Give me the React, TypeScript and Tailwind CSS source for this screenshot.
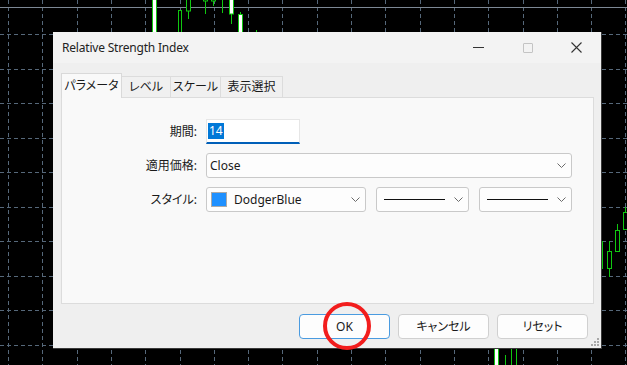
import { FC } from 'react'

const GREEN = '#10c810'

const Chart: FC = () => {
  const vx = Array.from({ length: 19 }, (_, i) => 8 + i * 34.3)
  const hy = Array.from({ length: 10 }, (_, i) => 34 + i * 34.5)
  return (
    <svg className="absolute inset-0" width={627} height={365} viewBox="0 0 627 365">
      <rect width={627} height={365} fill="#000" />
      {vx.map((x) => (
        <line key={'v' + x} x1={Math.round(x) + 0.5} y1={0} x2={Math.round(x) + 0.5} y2={365} stroke="#56687a" strokeDasharray="4 3" />
      ))}
      {hy.map((y) => (
        <line key={'h' + y} x1={0} y1={Math.round(y) + 0.5} x2={627} y2={Math.round(y) + 0.5} stroke="#56687a" strokeDasharray="4 3" />
      ))}
      <line x1={0} y1={7.5} x2={627} y2={7.5} stroke="#7d8895" />
      {/* top candles */}
      <rect x={152.5} y={-2} width={4} height={36} fill="#fff" stroke={GREEN} />
      <rect x={178.5} y={10.5} width={3} height={24} fill="#000" stroke={GREEN} />
      <line x1={188.5} y1={0} x2={188.5} y2={19} stroke={GREEN} />
      <rect x={186.5} y={-2} width={4} height={13} fill="#000" stroke={GREEN} />
      <line x1={205.5} y1={0} x2={205.5} y2={14} stroke={GREEN} />
      <rect x={203.5} y={-2} width={4} height={3} fill="#000" stroke={GREEN} />
      <line x1={213.5} y1={0} x2={213.5} y2={6} stroke={GREEN} />
      <rect x={211.5} y={-2} width={4} height={3} fill="#000" stroke={GREEN} />
      <line x1={222.5} y1={0} x2={222.5} y2={13} stroke={GREEN} />
      <line x1={231.5} y1={0} x2={231.5} y2={24} stroke={GREEN} />
      <rect x={229.5} y={-2} width={4} height={16} fill="#fff" stroke={GREEN} />
      <line x1={240.5} y1={12} x2={240.5} y2={34} stroke={GREEN} />
      <rect x={238.5} y={14.5} width={4} height={20} fill="#fff" stroke={GREEN} />
      <line x1={256.5} y1={30} x2={256.5} y2={34} stroke={GREEN} />
      {/* right candles */}
      <line x1={602.5} y1={241} x2={602.5} y2={269} stroke={GREEN} />
      <line x1={609.5} y1={241} x2={609.5} y2={277} stroke={GREEN} />
      <rect x={607.5} y={251.5} width={4} height={17} fill="#000" stroke={GREEN} />
      <line x1={617.5} y1={224} x2={617.5} y2={252} stroke={GREEN} />
      <rect x={615.5} y={230.5} width={4} height={21} fill="#000" stroke={GREEN} />
      <line x1={625.5} y1={207} x2={625.5} y2={230} stroke={GREEN} />
      <rect x={623.5} y={212.5} width={5} height={17} fill="#000" stroke={GREEN} />
      {/* bottom candles */}
      <rect x={494.5} y={346} width={4} height={22} fill="#fff" stroke={GREEN} />
      <line x1={505.5} y1={355} x2={505.5} y2={365} stroke={GREEN} />
      <line x1={511.5} y1={348} x2={511.5} y2={365} stroke={GREEN} />
      <line x1={516.5} y1={348} x2={516.5} y2={365} stroke={GREEN} />
    </svg>
  )
}

const Chevron: FC = () => (
  <svg width={9} height={5} viewBox="0 0 9 5" className="shrink-0">
    <path d="M0.5 0.5 L4.5 4.5 L8.5 0.5" fill="none" stroke="#6b6b6b" strokeWidth={1} />
  </svg>
)

const Select: FC<{ className: string; children?: React.ReactNode }> = ({ className, children }) => (
  <div
    className={`flex h-[25px] items-center rounded-[3px] border border-[#c9c9c9] bg-[#fdfdfd] pr-[5px] ${className}`}
  >
    <div className="flex min-w-0 flex-1 items-center">{children}</div>
    <Chevron />
  </div>
)

const tabs = [
  { label: 'パラメータ', w: 'w-[61px]', active: true },
  { label: 'レベル', w: 'w-[50px]', active: false },
  { label: 'スケール', w: 'w-[51px]', active: false },
  { label: '表示選択', w: 'w-[63px]', active: false },
]

export default function App() {
  return (
    <div
      className="relative h-[365px] w-[627px] overflow-hidden bg-black text-[12px] text-[#1a1a1a] [font-feature-settings:'palt']"
      style={{ fontFamily: "'Noto Sans', 'Noto Sans CJK JP', sans-serif" }}
    >
      <Chart />

      {/* dialog window */}
      <div className="absolute left-[53px] top-[32px] flex h-[317px] w-[549px] flex-col border-r border-b border-[#3a3a3a] bg-[#efefef]">
        <div className="flex h-[31px] shrink-0 items-center bg-[#f3f3f3] pl-[9px]">
          <span className="flex-1 text-[12px] tracking-[-0.2px] text-[#222]">Relative Strength Index</span>
          <div className="flex h-full items-center">
            <div className="flex w-[49px] justify-center">
              <div className="h-px w-[11px] bg-[#333]" />
            </div>
            <div className="flex w-[49px] justify-center">
              <div className="h-[10px] w-[10px] rounded-[1px] border border-[#c4c4c4]" />
            </div>
            <div className="flex w-[49px] justify-center">
              <svg width={11} height={11} viewBox="0 0 11 11">
                <path d="M0.5 0.5 L10.5 10.5 M10.5 0.5 L0.5 10.5" stroke="#333" strokeWidth={1.1} />
              </svg>
            </div>
          </div>
        </div>

        {/* tabs */}
        <div className="mt-[10px] flex h-[24px] items-end pl-[8px]">
          {tabs.map((t) =>
            t.active ? (
              <div
                key={t.label}
                className={`relative z-10 -mb-px flex h-[25px] items-center justify-center border border-b-0 border-[#d9d9d9] bg-[#f9f9f9] ${t.w}`}
              >
                {t.label}
              </div>
            ) : (
              <div
                key={t.label}
                className={`-ml-px flex h-[21px] items-center justify-center border border-b-0 border-[#dcdcdc] bg-[#f0f0f0] ${t.w}`}
              >
                {t.label}
              </div>
            )
          )}
        </div>

        {/* panel */}
        <div className="ml-[8px] flex h-[207px] w-[533px] flex-col gap-[9px] border border-[#dcdcdc] bg-[#f9f9f9] pt-[21px]">
          <div className="flex h-[25px] items-center">
            <span className="w-[136px] pr-px text-right">期間:</span>
            <div className="ml-[8px] flex h-[25px] w-[94px] items-center border border-[#e6e6e6] border-b-2 border-b-[#005fb8] bg-white pl-px">
              <span className="bg-[#0078d7] px-px leading-[16px] text-white">14</span>
            </div>
          </div>
          <div className="flex h-[25px] items-center">
            <span className="w-[136px] pr-px text-right">適用価格:</span>
            <Select className="ml-[8px] w-[366px] pl-[3px]">Close</Select>
          </div>
          <div className="flex h-[25px] items-center">
            <span className="w-[136px] pr-px text-right">スタイル:</span>
            <Select className="ml-[8px] w-[160px] pl-[4px]">
              <div className="h-[15px] w-[16px] border border-[#aaa] bg-[#1e90ff]" />
              <span className="ml-[7px]">DodgerBlue</span>
            </Select>
            <Select className="ml-[10px] w-[93px] pl-[7px]">
              <div className="h-px w-[61px] bg-[#111]" />
            </Select>
            <Select className="ml-[10px] w-[93px] pl-[7px]">
              <div className="h-px w-[61px] bg-[#111]" />
            </Select>
          </div>
        </div>

        {/* buttons */}
        <div className="mt-[10px] flex justify-end gap-[8px] pr-[13px]">
          <button className="h-[25px] w-[91px] rounded-[4px] border border-[#4a9be0] bg-[#fdfdfd]">OK</button>
          <button className="h-[25px] w-[91px] rounded-[4px] border border-[#d0d0d0] bg-[#fdfdfd]">キャンセル</button>
          <button className="h-[25px] w-[91px] rounded-[4px] border border-[#d0d0d0] bg-[#fdfdfd]">リセット</button>
        </div>

        {/* resize grip */}
        <svg className="absolute bottom-[2px] right-[2px]" width={8} height={8} viewBox="0 0 8 8">
          <rect x={6} y={0} width={2} height={2} fill="#a8a8a8" />
          <rect x={3} y={3} width={2} height={2} fill="#a8a8a8" />
          <rect x={6} y={3} width={2} height={2} fill="#a8a8a8" />
          <rect x={0} y={6} width={2} height={2} fill="#a8a8a8" />
          <rect x={3} y={6} width={2} height={2} fill="#a8a8a8" />
          <rect x={6} y={6} width={2} height={2} fill="#a8a8a8" />
        </svg>
      </div>

      {/* red annotation circle */}
      <div className="absolute left-[323px] top-[302px] h-[48px] w-[48px] rounded-full border-4 border-[#f21d1d]" />
    </div>
  )
}
